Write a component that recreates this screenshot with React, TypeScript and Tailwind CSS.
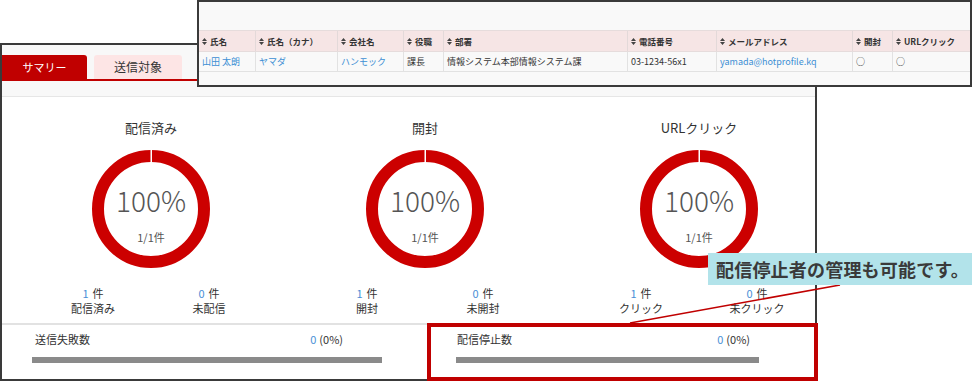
const font = { fontFamily: '"Noto Sans CJK JP", "Noto Sans", sans-serif' };

const cols = [
  { label: "氏名", w: "w-[57px]" },
  { label: "氏名（カナ）", w: "w-[82px]" },
  { label: "会社名", w: "w-[66px]" },
  { label: "役職", w: "w-[40px]" },
  { label: "部署", w: "w-[184px]" },
  { label: "電話番号", w: "w-[89px]" },
  { label: "メールアドレス", w: "w-[136px]" },
  { label: "開封", w: "w-[40px]" },
  { label: "URLクリック", w: "w-[75px]" },
];

const row = [
  { text: "山田 太朗", link: true },
  { text: "ヤマダ", link: true },
  { text: "ハンモック", link: true },
  { text: "課長" },
  { text: "情報システム本部情報システム課" },
  { text: "03-1234-56x1" },
  { text: "yamada@hotprofile.kq", link: true },
  { text: "○" },
  { text: "○" },
];

const charts = [
  { title: "配信済み", a: ["1", "配信済み"], b: ["0", "未配信"] },
  { title: "開封", a: ["1", "開封"], b: ["0", "未開封"] },
  { title: "URLクリック", a: ["1", "クリック"], b: ["0", "未クリック"] },
];

function SortIcon() {
  return (
    <svg width="5" height="7" viewBox="0 0 5 7" className="mr-[3px] shrink-0">
      <path d="M2.5 0 L5 3 H0 Z M0 4 H5 L2.5 7 Z" fill="#444" />
    </svg>
  );
}

function Donut() {
  return (
    <svg width="118" height="118" viewBox="0 0 118 118" className="absolute inset-0">
      <circle cx="59" cy="59" r="53" fill="none" stroke="#cc0000" strokeWidth="12" />
      <rect x="58.5" y="0" width="1.5" height="13" fill="#fff" />
    </svg>
  );
}

function Stat({ n, label }: { n: string; label: string }) {
  return (
    <div className="flex-1 flex flex-col items-center text-[11px] leading-[15px] text-[#333]">
      <div>
        <span className="text-[#4a8fd6] mr-[4px]">{n}</span>件
      </div>
      <div>{label}</div>
    </div>
  );
}

export default function App() {
  return (
    <div className="relative w-[972px] h-[381px] bg-white overflow-hidden" style={font}>
      {/* summary window */}
      <div className="absolute left-0 top-[43px] w-[817px] h-[338px] border-2 border-[#3a3a3a] bg-white flex flex-col overflow-hidden">
        <div className="bg-[#f8f8f8] border-b border-[#e6e6e6] pt-[10px] h-[52px]">
          <div className="flex gap-[7px] items-end h-[24px]">
            <div className="w-[85px] h-[24px] rounded-tr-[3px] bg-[#c00000] text-white text-[11px] flex items-center justify-center">
              サマリー
            </div>
            <div className="w-[88px] h-[24px] rounded-t-[3px] bg-[#fde5e5] text-[#333] text-[12px] flex items-center justify-center">
              送信対象
            </div>
          </div>
          <div className="h-[2px] bg-[#c00000]" />
        </div>

        <div className="flex px-[12px] pt-[22px]">
          {charts.map((c) => (
            <div key={c.title} className="w-[274px] shrink-0 flex flex-col items-center">
              <div className="text-[13px] leading-[18px] text-[#333]">{c.title}</div>
              <div className="relative mt-[13px] w-[118px] h-[118px] flex flex-col items-center">
                <Donut />
                <div className="relative mt-[34px] text-[28px] leading-[32px] font-light text-[#555]">100%</div>
                <div className="relative mt-[14px] text-[11px] leading-[14px] text-[#555]">1/1件</div>
              </div>
              <div className="mt-[18px] w-full px-[21px] flex">
                <Stat n={c.a[0]} label={c.a[1]} />
                <Stat n={c.b[0]} label={c.b[1]} />
              </div>
            </div>
          ))}
        </div>

        <div className="mt-[7px] border-t-2 border-[#e2e2e2] flex text-[11px] leading-[15px] text-[#333]">
          <div className="w-[406px] shrink-0 pl-[30px] pt-[7px]">
            <div className="w-[311px] pl-[3px] flex justify-between">
              <span>送信失敗数</span>
              <span>
                <span className="text-[#4a8fd6] mr-[3px]">0</span>(0%)
              </span>
            </div>
            <div className="mt-[10px] w-[350px] h-[6px] bg-[#8a8a8a]" />
          </div>
          <div className="pl-[48px] pt-[7px]">
            <div className="w-[294px] pl-[1px] flex justify-between">
              <span>配信停止数</span>
              <span>
                <span className="text-[#4a8fd6] mr-[3px]">0</span>(0%)
              </span>
            </div>
            <div className="mt-[10px] w-[303px] h-[6px] bg-[#8a8a8a]" />
          </div>
        </div>
      </div>

      {/* target list window */}
      <div className="absolute left-[197px] top-0 w-[775px] h-[87px] border-2 border-[#3a3a3a] bg-[#f9f9f9]">
        <div className="mt-[28px] flex h-[22px] bg-[#f6e5e5] border-y border-[#e6dcdc]">
          {cols.map((c) => (
            <div
              key={c.label}
              className={`${c.w} shrink-0 border-r border-[#e3d9d9] last:border-r-0 flex items-center pl-[3px] text-[8.5px] font-bold text-[#333] whitespace-nowrap`}
            >
              <SortIcon />
              {c.label}
            </div>
          ))}
        </div>
        <div className="flex h-[20px] border-b border-[#e2e2e2]">
          {row.map((r, i) => (
            <div
              key={i}
              className={`${cols[i].w} shrink-0 border-r border-[#e2e2e2] last:border-r-0 flex items-center pl-[3px] text-[9px] whitespace-nowrap ${
                r.link ? "text-[#3d8fd4]" : "text-[#333]"
              }`}
            >
              {r.text}
            </div>
          ))}
        </div>
      </div>

      {/* callout */}
      <svg className="absolute left-0 top-0" width="972" height="381">
        <line x1="630" y1="323" x2="840" y2="285" stroke="#c00000" strokeWidth="1.5" />
      </svg>
      <div className="absolute left-[427px] top-[323px] w-[391px] h-[58px] border-4 border-[#c00000]" />
      <div className="absolute left-[708px] top-[253px] w-[264px] h-[32px] bg-[#b2e3ea] flex items-center pl-[8px] text-[18px] font-semibold tracking-[0.2px] text-[#3a3a3a] whitespace-nowrap">
        配信停止者の管理も可能です。
      </div>
    </div>
  );
}
